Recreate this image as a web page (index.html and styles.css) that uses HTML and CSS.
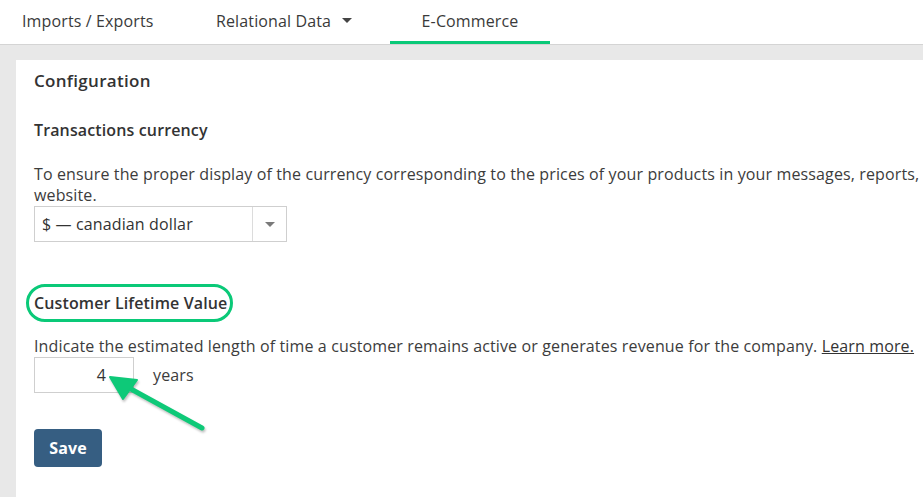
FILE: index.html
```html
<!DOCTYPE html>
<html lang="en">
<head>
<meta charset="utf-8">
<title>E-Commerce</title>
<link rel="stylesheet" href="styles.css">
</head>
<body>
<nav class="tabs">
  <a class="tab tab-first">Imports / Exports</a>
  <a class="tab tab-second">Relational Data <span class="tab-caret"></span></a>
  <a class="tab tab-active">E-Commerce</a>
</nav>
<main class="page">
  <section class="card">
    <h2 class="card-title">Configuration</h2>
    <h3 class="field-title">Transactions currency</h3>
    <p class="field-help">To ensure the proper display of the currency corresponding to the prices of your products in your messages, reports, and on your<br>website.</p>
    <div class="select">
      <span class="select-value">$ — canadian dollar</span>
      <span class="select-toggle"><span class="select-caret"></span></span>
    </div>
    <h3 class="field-title field-title-clv"><span class="highlight">Customer Lifetime Value</span></h3>
    <p class="field-help field-help-clv">Indicate the estimated length of time a customer remains active or generates revenue for the company. <a class="link">Learn more.</a></p>
    <div class="years-row">
      <div class="number-input">4</div>
      <span class="years-label">years</span>
    </div>
    <button class="btn-save">Save</button>
  </section>
</main>
<svg class="annotation-arrow" width="923" height="497" viewBox="0 0 923 497">
  <line x1="202" y1="428" x2="120" y2="383" stroke="#0ec978" stroke-width="5" stroke-linecap="round"/>
  <polygon points="110,377 137,380 123,399" fill="#0ec978" stroke="#0ec978" stroke-width="2" stroke-linejoin="round"/>
</svg>
</body>
</html>
```
FILE: styles.css
```css
* { box-sizing: border-box; }
html, body { margin: 0; padding: 0; }
body {
  width: 923px;
  height: 497px;
  overflow: hidden;
  background: #e8e8e8;
  font-family: "Open Sans", "Liberation Sans", sans-serif;
  color: #333;
  letter-spacing: 0.13px;
  position: relative;
}
.tabs {
  display: flex;
  height: 45px;
  background: #fff;
  border-bottom: 1px solid #d4d4d4;
}
.tab {
  display: flex;
  align-items: center;
  flex: none;
  height: 44px;
  padding: 0;
  font-size: 16px;
  color: #3a3a3a;
  border-bottom: 3px solid transparent;
}
.tab-first { width: 184px; padding-left: 22px; }
.tab-second { width: 206px; padding-left: 32px; }
.tab-active {
  width: 160px;
  justify-content: center;
  border-bottom-color: #0ac978;
}
.tab-caret {
  display: inline-block;
  margin-left: 11px;
  width: 0; height: 0;
  border-left: 5px solid transparent;
  border-right: 5px solid transparent;
  border-top: 5px solid #444;
}
.page { padding: 15px 0 0 16px; }
.card {
  background: #fff;
  width: 1100px;
  height: 460px;
  padding: 9px 18px;
}
.card-title {
  margin: 0;
  font-size: 17px;
  line-height: 24px;
  font-weight: 600;
  letter-spacing: 0.3px;
  color: #333;
}
.field-title {
  margin: 26px 0 0;
  font-size: 16px;
  line-height: 22px;
  font-weight: 600;
  color: #333;
}
.field-help {
  margin: 23px 0 0;
  font-size: 16px;
  line-height: 21px;
  color: #3c3c3c;
}
.select {
  display: flex;
  width: 253px;
  height: 36px;
  border: 1px solid #cfcfcf;
  font-size: 16px;
}
.select-value {
  flex: 1;
  display: flex;
  align-items: center;
  padding-left: 7px;
  border-right: 1px solid #dcdcdc;
  color: #333;
}
.select-toggle {
  width: 33px;
  display: flex;
  align-items: center;
  justify-content: center;
}
.select-caret {
  width: 0; height: 0;
  border-left: 5px solid transparent;
  border-right: 5px solid transparent;
  border-top: 5px solid #7a7a7a;
}
.field-title-clv { margin-top: 50px; }
.highlight {
  border: 3px solid #0ac978;
  border-radius: 20px;
  padding: 5px 3px 5px 5px;
  margin-left: -8px;
}
.field-help-clv { margin-top: 22px; }
.link { color: #333; text-decoration: underline; }
.years-row {
  display: flex;
  align-items: center;
  gap: 19px;
}
.number-input {
  width: 100px;
  height: 36px;
  border: 1px solid #cfcfcf;
  display: flex;
  align-items: center;
  justify-content: flex-end;
  padding-right: 27px;
  font-size: 16px;
}
.years-label { font-size: 16px; color: #3c3c3c; }
.btn-save {
  display: block;
  margin-top: 36px;
  width: 68px;
  height: 38px;
  border: none;
  border-radius: 4px;
  background: #365e82;
  color: #fff;
  font-family: "Open Sans", "Liberation Sans", sans-serif;
  font-size: 16px;
  font-weight: 700;
  letter-spacing: 0.13px;
}
.annotation-arrow {
  position: absolute;
  left: 0;
  top: 0;
  pointer-events: none;
  filter: drop-shadow(1px 2px 1px rgba(0,0,0,0.25));
}
```
